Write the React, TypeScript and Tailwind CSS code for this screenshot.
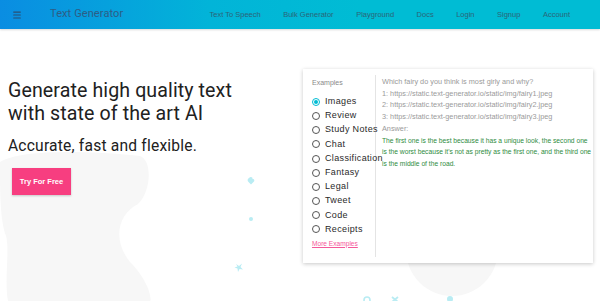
import { Menu } from 'lucide-react'

const NAV = ['Text To Speech', 'Bulk Generator', 'Playground', 'Docs', 'Login', 'Signup', 'Account']

const EXAMPLES = ['Images', 'Review', 'Study Notes', 'Chat', 'Classification', 'Fantasy', 'Legal', 'Tweet', 'Code', 'Receipts']

const PROMPT = [
    'Which fairy do you think is most girly and why?',
    '1: https://static.text-generator.io/static/img/fairy1.jpeg',
    '2: https://static.text-generator.io/static/img/fairy2.jpeg',
    '3: https://static.text-generator.io/static/img/fairy3.jpeg',
    'Answer:',
]

const ANSWER = [
    'The first one is the best because it has a unique look, the second one',
    "is the worst because it's not as pretty as the first one, and the third one",
    'is the middle of the road.',
]

function Decorations() {
    return (
        <svg className="absolute inset-0 pointer-events-none" width="600" height="272" viewBox="0 29 600 272">
            {/* grey blob behind the hero */}
            <path d="M0 162 C20 150 80 150 140 156 C152 160 152 190 138 204 C118 214 112 240 130 262 C150 282 152 301 150 301 L8 301 C4 280 10 250 6 236 C0 220 0 190 0 162 Z" fill="#f7f7f7" />
            {/* grey circle under the card */}
            <circle cx="452" cy="250" r="46" fill="#f7f7f7" />
            {/* cyan sprinkles */}
            <path d="M249 178 c1.5 -2 4 -1 3.5 1 c2 -0.5 2.5 2 1 3 l-2.5 2.5 l-2.5 -2.5 c-1.5 -1 -1 -3.5 0.5 -4 z" fill="#b9ecf3" />
            <circle cx="251" cy="219" r="2" fill="#b9ecf3" />
            <path d="M236 264 l3 2 l3 -2.5 l-1.5 3.5 l2.5 2.5 l-3.5 -0.5 l-1.5 3 l-0.5 -3.5 l-3 -1 l3 -1 z" fill="#b9ecf3" />
            <circle cx="367" cy="300" r="3" fill="none" stroke="#b9ecf3" strokeWidth="1.6" />
            <path d="M392 297 l6 5 M398 297 l-6 5" stroke="#b9ecf3" strokeWidth="1.8" />
            <circle cx="450" cy="299" r="3" fill="#b9ecf3" />
        </svg>
    )
}

export default function App() {
    return (
        <div className="w-[600px] h-[301px] overflow-hidden bg-white" style={{ fontFamily: 'Roboto, "Liberation Sans", sans-serif' }}>
            <header className="relative z-10 h-[29px] flex items-center bg-[linear-gradient(90deg,#0a8de2_0%,#02b4d8_35%,#00bcd4_60%,#00bcd4_100%)] shadow-[0_1px_2px_rgba(0,0,0,0.15)]">
                <Menu className="ml-[12px] w-[10px] h-[10px] text-[#2a4f73]" strokeWidth={2.6} />
                <span className="ml-[28px] text-[11px] text-[#2d5d86] tracking-[0.1px]">Text Generator</span>
                <nav className="ml-auto mr-[30px] flex gap-[22.5px] font-['Liberation_Sans',sans-serif] text-[7.5px] text-[#2b6578]">
                    {NAV.map(n => (
                        <span key={n}>{n}</span>
                    ))}
                </nav>
            </header>

            <main className="relative h-[272px] flex">
                <Decorations />

                <div className="relative w-[303px] pl-[8px] pt-[50px] text-[#212121]">
                    <h1 className="text-[19.6px] leading-[23px] tracking-[0.1px]">
                        Generate high quality text
                        <br />
                        with state of the art AI
                    </h1>
                    <p className="mt-[11px] text-[15.6px] leading-[20px] tracking-[0.2px]">Accurate, fast and flexible.</p>
                    <button className="mt-[12px] ml-[4px] w-[59px] h-[27px] bg-[#f73e80] text-white text-[7.5px] font-bold shadow-[0_1px_2px_rgba(0,0,0,0.2)] font-['Liberation_Sans',sans-serif]">
                        Try For Free
                    </button>
                </div>

                <div className="relative mt-[40px] w-[290px] h-[194px] bg-white shadow-[0_1px_4px_rgba(0,0,0,0.22)] flex font-['Liberation_Sans',sans-serif]">
                    <div className="w-[73px] shrink-0 border-r border-[#e4e4e4] my-[6px] pl-[9px] pt-[2px] relative">
                        <div className="text-[7px] leading-[11.7px] text-[#8a8a8a]">Examples</div>
                        <div className="mt-[6px] flex flex-col">
                            {EXAMPLES.map((e, i) => (
                                <label key={e} className="flex items-center h-[14.2px] whitespace-nowrap">
                                    {i === 0 ? (
                                        <span className="w-[8px] h-[8px] rounded-full border border-[#00bcd4] flex items-center justify-center shrink-0">
                                            <span className="w-[4.5px] h-[4.5px] rounded-full bg-[#00bcd4]" />
                                        </span>
                                    ) : (
                                        <span className="w-[8px] h-[8px] rounded-full border border-[#555] shrink-0" />
                                    )}
                                    <span className="ml-[5px] text-[9px] text-[#2a2a2a] tracking-[0.35px]">{e}</span>
                                </label>
                            ))}
                        </div>
                        <a className="block mt-[2px] text-[6.6px] text-[#f5599a] underline">More Examples</a>
                    </div>
                    <div className="pl-[6px] pt-[7px] leading-[11.7px] whitespace-nowrap">
                        {PROMPT.map(l => (
                            <div key={l} className="text-[7.3px] text-[#9a9a9a]">{l}</div>
                        ))}
                        {ANSWER.map(l => (
                            <div key={l} className="text-[6.7px] text-[#2e8b3e]">{l}</div>
                        ))}
                    </div>
                </div>
            </main>
        </div>
    )
}
